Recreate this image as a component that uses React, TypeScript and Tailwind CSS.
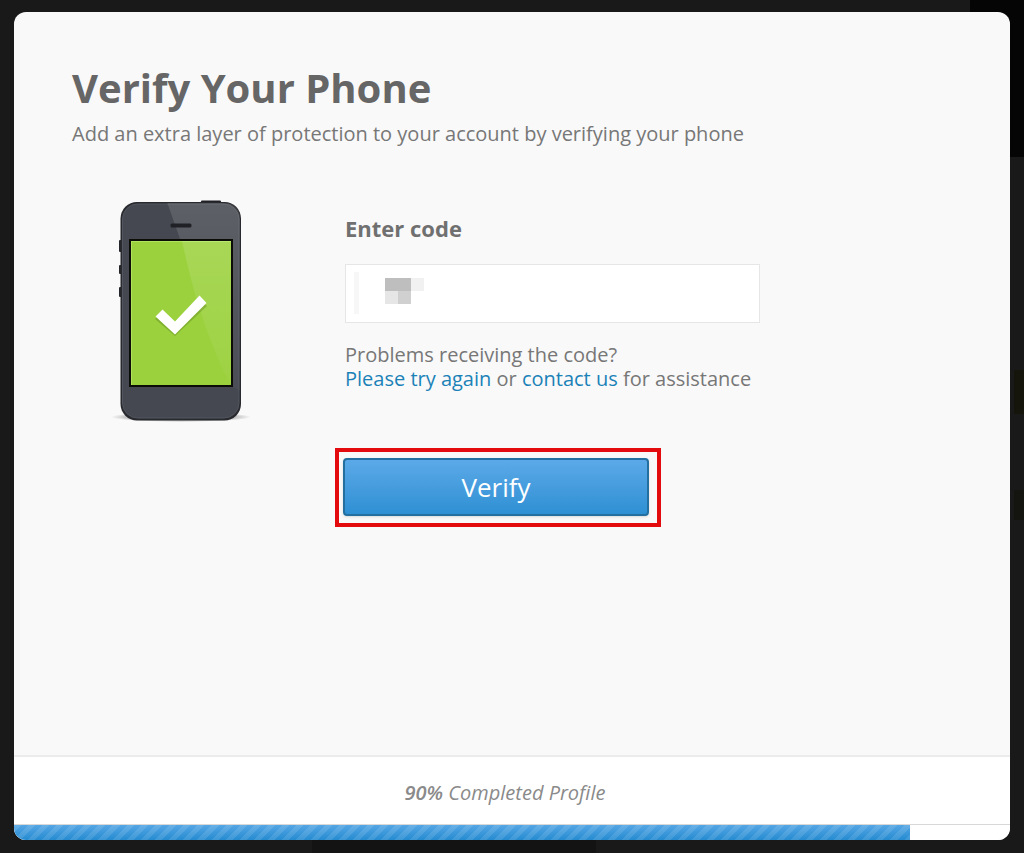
import React from 'react';

const progress = 90;

function PhoneIcon() {
  return (
    <svg viewBox="110 194 142 234" className="h-[234px] w-[142px] shrink-0" aria-hidden="true">
      <defs>
        <linearGradient id="glare" x1="0" y1="0" x2="0" y2="1">
          <stop offset="0" stopColor="#fff" stopOpacity="0.13" />
          <stop offset="1" stopColor="#fff" stopOpacity="0.03" />
        </linearGradient>
        <radialGradient id="shadow">
          <stop offset="0" stopColor="#000" stopOpacity="0.4" />
          <stop offset="0.8" stopColor="#000" stopOpacity="0.2" />
          <stop offset="1" stopColor="#000" stopOpacity="0" />
        </radialGradient>
        <clipPath id="body">
          <rect x="122" y="203" width="118" height="216" rx="15" />
        </clipPath>
        <clipPath id="screen">
          <rect x="131" y="241" width="100" height="144" />
        </clipPath>
      </defs>
      <ellipse cx="181" cy="417" rx="70" ry="5" fill="url(#shadow)" />
      <rect x="201" y="200.500" width="20" height="4" rx="1" fill="#202126" />
      <rect x="119" y="240" width="4" height="12" rx="1" fill="#25262b" />
      <rect x="119" y="265" width="4" height="9" rx="1" fill="#25262b" />
      <rect x="119" y="287" width="4" height="10" rx="1" fill="#25262b" />
      <rect x="120.500" y="202" width="120.500" height="218.500" rx="16.500" fill="#292a2f" />
      <rect x="122.500" y="204" width="116.500" height="214" rx="15" fill="#454850" stroke="#53565e" strokeWidth="1" />
      <g clipPath="url(#body)">
        <path d="M167 202H242V392L232 386Z" fill="url(#glare)" />
      </g>
      <rect x="170.500" y="223.500" width="21" height="4" rx="1.500" fill="#202126" />
      <rect x="129" y="239" width="104" height="148" fill="#0b0d06" />
      <rect x="131" y="241" width="100" height="144" fill="#9bd13d" />
      <path d="M131.500 385V241.500H231" fill="none" stroke="#b1e45c" />
      <g clipPath="url(#screen)">
        <path d="M182 241H231V385Q201 330 182 241Z" fill="url(#glare)" />
      </g>
      <path d="M155 319L162 312L175 324L200 299L207 306L175 336Z" fill="#4f7717" opacity="0.35" />
      <path d="M155.500 316.500L162.500 309.500L175 321.500L199.500 295.500L206.500 303L175 334.500Z" fill="#fff" />
    </svg>
  );
}

export default function App() {
  return (
    <div className="relative flex min-h-screen bg-[#191919] px-[14px] pt-3 pb-[13px] font-['Open_Sans',sans-serif] text-xl text-[#777]">
      {/* dimmed page behind the dialog */}
      <div className="absolute top-0 right-0 h-[157px] w-[54px] bg-[#050505]" />
      <div className="absolute top-[370px] right-0 h-[44px] w-[10px] bg-[#15150b]" />
      <div className="absolute top-[490px] right-0 h-[30px] w-[10px] bg-[#15150f]" />
      <div className="absolute bottom-0 left-[312px] h-[13px] w-[284px] bg-[#131313]" />

      <main className="relative flex flex-1 flex-col overflow-hidden rounded-xl bg-[#f9f9f9]">
        <div className="flex-1 px-[58px] pt-[52px] pb-8">
          <h1 className="text-[40px] leading-12 font-bold text-[#666]">Verify Your Phone</h1>
          <p className="mt-2 leading-7">
            Add an extra layer of protection to your account by verifying your phone
          </p>

          <div className="mt-[46px] flex items-start gap-[93px] pl-[38px]">
            <PhoneIcon />

            <form className="w-full max-w-[415px] pt-5" onSubmit={(e) => e.preventDefault()}>
              <label htmlFor="code" className="block text-[22px] leading-7 font-bold text-[#707070]">
                Enter code
              </label>
              <div className="relative mt-[22px]">
                <input
                  id="code"
                  type="text"
                  className="block h-[59px] w-full border border-[#e6e6e6] bg-white px-4 outline-none"
                />
                <div className="pointer-events-none absolute top-2 left-[9px] flex items-start">
                  <div className="h-[42px] w-[5px] bg-[#f7f7f7]" />
                  <div className="mt-[6px] ml-[26px] grid grid-cols-3">
                    <span className="size-[13px] bg-[#bebebe]" />
                    <span className="size-[13px] bg-[#bebebe]" />
                    <span className="size-[13px] bg-[#f1f1f1]" />
                    <span className="size-[13px] bg-[#e6e6e6]" />
                    <span className="size-[13px] bg-[#d0d0d0]" />
                  </div>
                </div>
              </div>

              <p className="mt-5 leading-6">
                Problems receiving the code?
                <br />
                <a href="#" className="text-[#1b82b8]">Please try again</a> or{' '}
                <a href="#" className="text-[#1b82b8]">contact us</a> for assistance
              </p>

              <div className="mt-[57px] -ml-[10px] w-[326px] border-4 border-[#e30b0d] pt-[6px] pr-2 pb-[7px] pl-1">
                <button
                  type="submit"
                  className="block h-[58px] w-full cursor-pointer rounded border-2 border-[#236f9f] bg-linear-to-b from-[#5ba9e8] to-[#2d90d3] text-[26px] leading-8 text-white shadow-sm"
                >
                  Verify
                </button>
              </div>
            </form>
          </div>
        </div>

        <footer className="border-t-2 border-[#ececec] bg-white">
          <p className="pt-[22px] pr-[14px] pb-[17px] text-center leading-7 text-[#8a8a8a] italic">
            <strong className="font-semibold">{progress}%</strong> Completed Profile
          </p>
          <div className="h-4 border-t border-[#d8d8d8]">
            <div
              className="h-full bg-[repeating-linear-gradient(135deg,#ffffff1c_0px,#ffffff1c_5px,transparent_5px,transparent_10px),linear-gradient(#55a6e5,#258bd0)]"
              style={{ width: `${progress}%` }}
            />
          </div>
        </footer>
      </main>
    </div>
  );
}
